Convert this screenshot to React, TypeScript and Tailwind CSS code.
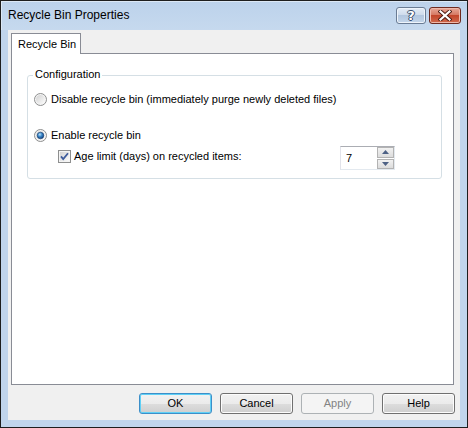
import React from "react";

const font = "font-['Liberation_Sans',Arial,sans-serif]";

function RadioIcon({ checked }: { checked?: boolean }) {
  return (
    <svg width="13" height="13" viewBox="0 0 13 13" className="shrink-0">
      <defs>
        <linearGradient id={checked ? "rgc" : "rgu"} x1="0" y1="0" x2="1" y2="1">
          <stop offset="0" stopColor="#d2d2d2" />
          <stop offset="1" stopColor="#fdfdfd" />
        </linearGradient>
        <radialGradient id="dot" cx="0.4" cy="0.35" r="0.7">
          <stop offset="0" stopColor="#bfe5fb" />
          <stop offset="0.45" stopColor="#3a86c8" />
          <stop offset="1" stopColor="#0d3b78" />
        </radialGradient>
      </defs>
      <circle cx="6.5" cy="6.5" r="6" fill="#f4f4f4" stroke="#8e8f8f" strokeWidth="1" />
      <circle cx="6.5" cy="6.5" r="4.5" fill={`url(#${checked ? "rgc" : "rgu"})`} />
      {checked && <circle cx="6.5" cy="6.5" r="3.3" fill="url(#dot)" stroke="#173e6e" strokeWidth="0.6" />}
    </svg>
  );
}

function CheckIcon() {
  return (
    <svg width="13" height="13" viewBox="0 0 13 13" className="shrink-0">
      <defs>
        <linearGradient id="cbg" x1="0" y1="0" x2="1" y2="1">
          <stop offset="0" stopColor="#d3d3d3" />
          <stop offset="1" stopColor="#fbfbfb" />
        </linearGradient>
      </defs>
      <rect x="0.5" y="0.5" width="12" height="12" fill="#f4f4f4" stroke="#8e8f8f" />
      <rect x="2" y="2" width="9" height="9" fill="url(#cbg)" />
      <path d="M3 6.4 L5.2 9 L10 3.2" fill="none" stroke="#3e5c9c" strokeWidth="1.8" strokeLinejoin="miter" />
    </svg>
  );
}

function Btn({ label, variant }: { label: string; variant?: "default" | "disabled" }) {
  const border =
    variant === "default" ? "border-[#3c8fc9]" : variant === "disabled" ? "border-[#adb2b5]" : "border-[#707070]";
  const bg =
    variant === "disabled"
      ? "bg-[#f4f4f4]"
      : "bg-[linear-gradient(to_bottom,#f2f2f2_0%,#ebebeb_50%,#dddddd_50%,#cfcfcf_100%)]";
  const inner =
    variant === "default"
      ? "shadow-[inset_0_0_0_1px_#5fd0f6]"
      : variant === "disabled"
      ? ""
      : "shadow-[inset_0_0_0_1px_#fcfcfc]";
  return (
    <div
      className={`w-[73px] h-[21px] rounded-[3px] border ${border} ${bg} ${inner} flex items-center justify-center text-[11px] leading-[13px] ${
        variant === "disabled" ? "text-[#838383]" : "text-black"
      }`}
    >
      {label}
    </div>
  );
}

export default function App() {
  return (
    <div className={`w-[468px] h-[428px] border border-[#1e1e1e] bg-[#c1d5ec] flex flex-col ${font}`}>
      {/* Title bar */}
      <div className="h-[29px] flex items-start bg-[linear-gradient(to_bottom,#bcd2eb,#c6d9ee)] shadow-[inset_1px_1px_0_#dce8f5]">
        <div className="pl-[7px] pt-[6px] text-[12px] leading-[16px] text-black">Recycle Bin Properties</div>
        <div className="ml-auto mt-[6px] mr-[6px] flex gap-[3px]">
          <div className="w-[30px] h-[17px] rounded-[3px] border border-[#6a7c94] bg-[linear-gradient(to_bottom,#e4edf7_0%,#cfdcec_45%,#b3c7df_50%,#c4d6ea_100%)] shadow-[inset_0_0_0_1px_#eef4fb] flex items-center justify-center">
            <span className="text-[13px] leading-[13px] font-bold text-white font-['DejaVu_Sans',sans-serif] [text-shadow:0_0_1px_#3b4f6d,1px_0_0_#3b4f6d,-1px_0_0_#3b4f6d,0_1px_0_#3b4f6d,0_-1px_0_#3b4f6d]">
              ?
            </span>
          </div>
          <div className="w-[32px] h-[17px] rounded-[3px] border border-[#6e2a1f] bg-[linear-gradient(to_bottom,#e7a898_0%,#d67a64_45%,#c2462b_50%,#d06a4e_100%)] shadow-[inset_0_0_0_1px_#eeb8aa] flex items-center justify-center">
            <svg width="14" height="11" viewBox="0 0 14 11">
              <path d="M2.5 1.5 L11.5 9.5 M11.5 1.5 L2.5 9.5" stroke="#4a1a12" strokeWidth="4" strokeLinecap="square" />
              <path d="M2.5 1.5 L11.5 9.5 M11.5 1.5 L2.5 9.5" stroke="#ffffff" strokeWidth="2.2" strokeLinecap="square" />
            </svg>
          </div>
        </div>
      </div>
      {/* Client */}
      <div className="mx-[7px] h-[390px] bg-[#f0f0f0] flex flex-col pt-[3px] pl-[3px] pr-[6px]">
        <div className="flex">
          <div className="relative z-10 w-[70px] h-[21px] -mb-px bg-white border-l border-t border-r border-[#898c95] flex items-center pl-[6px] text-[11px] leading-[13px] text-black">
            Recycle Bin
          </div>
        </div>
        <div className="h-[332px] bg-white border border-[#898c95] flex flex-col">
          <div className="relative mt-[21px] ml-[15px] mr-[11px] h-[104px] border border-[#d5dfe5] rounded-[3px] flex flex-col">
            <span className="absolute left-[5px] top-[-8px] px-[2px] bg-white text-[11px] leading-[13px] text-black">
              Configuration
            </span>
            <div className="mt-[17px] ml-[6px] flex items-center h-[13px] gap-[4px] text-[11px] leading-[13px] text-black">
              <RadioIcon />
              <span>Disable recycle bin (immediately purge newly deleted files)</span>
            </div>
            <div className="mt-[23px] ml-[6px] flex items-center h-[13px] gap-[4px] text-[11px] leading-[13px] text-black">
              <RadioIcon checked />
              <span>Enable recycle bin</span>
            </div>
            <div className="mt-[4px] ml-[30px] mr-[46px] flex h-[24px] text-[11px] leading-[13px] text-black">
              <div className="mt-[4px] flex items-center gap-[3px] h-[13px] self-start">
                <CheckIcon />
                <span>Age limit (days) on recycled items:</span>
              </div>
              <div className="ml-auto w-[55px] h-[24px] border border-[#abadb3] border-r-[#e3e9ef] border-b-[#e3e9ef] border-l-[#e2e3ea] bg-white flex">
                <div className="flex-1 pl-[5px] flex items-center text-[11px]">7</div>
                <div className="w-[17px] flex flex-col gap-px">
                  <div className="h-[11px] border border-[#b3b3b3] bg-[linear-gradient(to_bottom,#f2f2f2,#dcdcdc)] flex items-center justify-center">
                    <svg width="7" height="4" viewBox="0 0 7 4"><path d="M0 4 L3.5 0 L7 4 Z" fill="#4d6185" /></svg>
                  </div>
                  <div className="h-[11px] border border-[#b3b3b3] bg-[linear-gradient(to_bottom,#f2f2f2,#dcdcdc)] flex items-center justify-center">
                    <svg width="7" height="4" viewBox="0 0 7 4"><path d="M0 0 L3.5 4 L7 0 Z" fill="#4d6185" /></svg>
                  </div>
                </div>
              </div>
            </div>
          </div>
        </div>
        <div className="mt-[8px] flex justify-end gap-[8px] mr-[-1px]">
          <Btn label="OK" variant="default" />
          <Btn label="Cancel" />
          <Btn label="Apply" variant="disabled" />
          <Btn label="Help" />
        </div>
      </div>
      <div className="flex-1" />
    </div>
  );
}
